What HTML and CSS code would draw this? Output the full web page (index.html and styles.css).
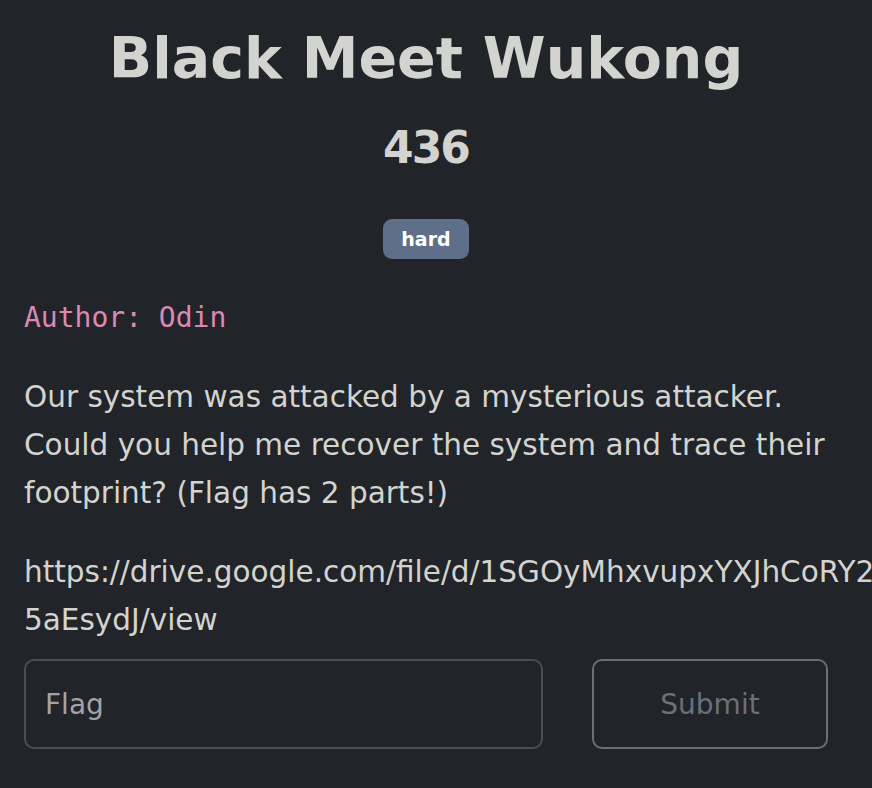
FILE: index.html
```html
<!DOCTYPE html>
<html lang="en">
<head>
<meta charset="utf-8">
<title>Black Meet Wukong</title>
<link rel="stylesheet" href="styles.css">
</head>
<body>
<main class="challenge">
  <h1 class="title">Black Meet Wukong</h1>
  <h2 class="points">436</h2>
  <div class="tags"><span class="badge">hard</span></div>
  <p class="author">Author: Odin</p>
  <div class="description">
    <p>Our system was attacked by a mysterious attacker. Could you help me recover the system and trace their footprint? (Flag has 2 parts!)</p>
    <p class="link">https://drive.google.com/file/d/1SGOyMhxvupxYXJhCoRY2nxKq-5aEsydJ/view</p>
  </div>
  <form class="submit-row">
    <input class="flag-input" type="text" placeholder="Flag">
    <button class="submit-btn" type="button">Submit</button>
  </form>
</main>
</body>
</html>
```
FILE: styles.css
```css
html, body {
  margin: 0;
  padding: 0;
  background: #212429;
  overflow-x: hidden;
}
body {
  font-family: "DejaVu Sans", "Noto Sans", sans-serif;
  color: #d3d3cf;
}
.challenge {
  padding: 0 44px 0 24px;
}
.title {
  margin: 23px 0 0;
  font-size: 57px;
  line-height: 70px;
  font-weight: 700;
  text-align: center;
}
.points {
  margin: 27px 0 0;
  font-size: 44px;
  line-height: 56px;
  font-weight: 700;
  letter-spacing: -2px;
  text-align: center;
}
.tags {
  margin-top: 43px;
  text-align: center;
}
.badge {
  display: inline-block;
  width: 86px;
  height: 40px;
  line-height: 40px;
  border-radius: 9px;
  background: #5f6f89;
  color: #ffffff;
  font-size: 19px;
  font-weight: 700;
}
.author {
  margin: 39px 0 0;
  font-family: "DejaVu Sans Mono", monospace;
  font-size: 28px;
  line-height: 40px;
  color: #db88b4;
}
.description p {
  margin: 35px 0 0;
  font-size: 29.5px;
  line-height: 48px;
}
.description .link {
  margin-top: 31px;
}
.submit-row {
  display: flex;
  gap: 49px;
  margin-top: 15px;
}
.flag-input {
  flex: 1;
  min-width: 0;
  height: 90px;
  box-sizing: border-box;
  background: transparent;
  border: 2px solid #4a4d53;
  border-radius: 10px;
  padding: 0 19px;
  font-family: "DejaVu Sans", sans-serif;
  font-size: 28px;
  color: #d3d3cf;
}
.flag-input::placeholder {
  color: #a2a3a6;
}
.submit-btn {
  width: 236px;
  height: 90px;
  box-sizing: border-box;
  background: transparent;
  border: 2px solid #6b6e74;
  border-radius: 10px;
  font-family: "DejaVu Sans", sans-serif;
  font-size: 28px;
  color: #6c7078;
}
```
